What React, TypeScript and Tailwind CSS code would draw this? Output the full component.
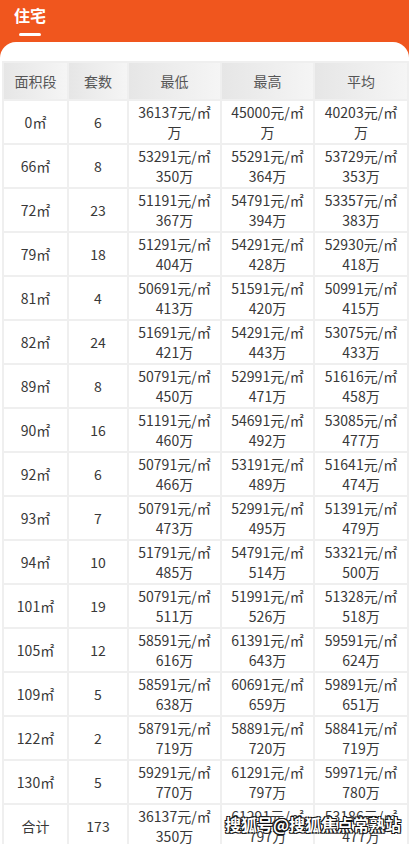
const rows: [string, string, string, string, string, string, string, string][] = [
  ["0㎡", "6", "36137", "", "45000", "", "40203", ""],
  ["66㎡", "8", "53291", "350", "55291", "364", "53729", "353"],
  ["72㎡", "23", "51191", "367", "54791", "394", "53357", "383"],
  ["79㎡", "18", "51291", "404", "54291", "428", "52930", "418"],
  ["81㎡", "4", "50691", "413", "51591", "420", "50991", "415"],
  ["82㎡", "24", "51691", "421", "54291", "443", "53075", "433"],
  ["89㎡", "8", "50791", "450", "52991", "471", "51616", "458"],
  ["90㎡", "16", "51191", "460", "54691", "492", "53085", "477"],
  ["92㎡", "6", "50791", "466", "53191", "489", "51641", "474"],
  ["93㎡", "7", "50791", "473", "52991", "495", "51391", "479"],
  ["94㎡", "10", "51791", "485", "54791", "514", "53321", "500"],
  ["101㎡", "19", "50791", "511", "51991", "526", "51328", "518"],
  ["105㎡", "12", "58591", "616", "61391", "643", "59591", "624"],
  ["109㎡", "5", "58591", "638", "60691", "659", "59891", "651"],
  ["122㎡", "2", "58791", "719", "58891", "720", "58841", "719"],
  ["130㎡", "5", "59291", "770", "61291", "797", "59971", "780"],
  ["合计", "173", "36137", "350", "61291", "797", "53186", "477"],
];

const headers = ["面积段", "套数", "最低", "最高", "平均"];

function PriceCell({ price, total }: { price: string; total: string }) {
  return (
    <div className="bg-white h-[42px] flex flex-col items-center justify-center leading-[20px]">
      <span>{price}元/㎡</span>
      <span>{total}万</span>
    </div>
  );
}

export default function App() {
  return (
    <div
      className="relative h-[844px] overflow-hidden bg-[#f0561e] text-[14px] text-[#383838]"
      style={{ fontFamily: '"Noto Sans CJK SC", "Noto Sans", sans-serif' }}
    >
      {/* ── Title ── */}
      <div className="h-[42px] pl-[14px] pt-[3px] relative">
        <div className="text-white text-[16px] font-bold leading-[24px]">住宅</div>
        <div className="absolute left-[19px] top-[33px] w-[22px] h-[3px] rounded-full bg-white" />
      </div>

      {/* ── Card ── */}
      <div className="bg-white rounded-t-[16px] pt-[19px] pl-[2px] h-full">
        <div className="grid grid-cols-[63px_58px_91px_91px_92px] gap-[2px] p-[2px] bg-[#efefef] text-center">
          {headers.map((h) => (
            <div
              key={h}
              className="h-[36px] flex items-center justify-center bg-linear-to-r from-[#e6e6e6] to-[#f5f5f5] text-[#555]"
            >
              {h}
            </div>
          ))}
          {rows.map((r) => (
            <div key={r[0]} className="contents">
              <div className="bg-white h-[42px] flex items-center justify-center">{r[0]}</div>
              <div className="bg-white h-[42px] flex items-center justify-center">{r[1]}</div>
              <PriceCell price={r[2]} total={r[3]} />
              <PriceCell price={r[4]} total={r[5]} />
              <PriceCell price={r[6]} total={r[7]} />
            </div>
          ))}
        </div>
      </div>

      {/* ── Watermark ── */}
      <div className="absolute left-[225px] top-[812px] whitespace-nowrap text-white text-[16px] font-bold leading-[24px] [text-shadow:_-1px_-1px_0_#111,_1px_-1px_0_#111,_-1px_1px_0_#111,_1px_1px_0_#111]">
        搜狐号@搜狐焦点常熟站
      </div>
    </div>
  );
}
